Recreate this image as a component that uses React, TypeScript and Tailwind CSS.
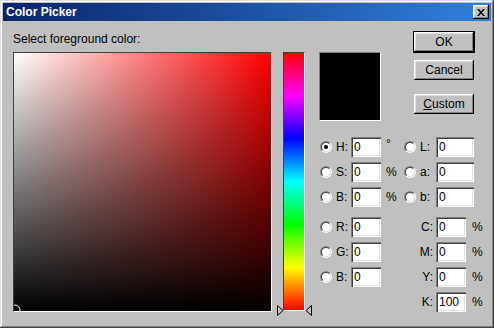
const raised =
  'shadow-[inset_-1px_-1px_#000,inset_1px_1px_#fff,inset_-2px_-2px_#808080,inset_2px_2px_#dfdfdf]';
const sunken =
  'shadow-[inset_1px_1px_#808080,inset_2px_2px_#404040,inset_-1px_-1px_#fff,inset_-2px_-2px_#dfdfdf]';

function Radio({ checked = false }: { checked?: boolean }) {
  return (
    <span className="flex h-[12px] w-[12px] items-center justify-center rounded-full border border-t-[#808080] border-l-[#808080] border-r-white border-b-white">
      <span className="flex h-[10px] w-[10px] items-center justify-center rounded-full border border-t-[#404040] border-l-[#404040] border-r-[#dfdfdf] border-b-[#dfdfdf] bg-white">
        {checked && <span className="h-[4px] w-[4px] rounded-full bg-black" />}
      </span>
    </span>
  );
}

function Field({ value, wide = false }: { value: string; wide?: boolean }) {
  return (
    <div className={`h-[20px] ${wide ? 'w-[38px]' : 'w-[30px]'} bg-white pl-[3px] pt-[3px] leading-[14px] ${sunken}`}>
      {value}
    </div>
  );
}

// left column: radio + label + field + unit
function LeftCell({ label, unit, checked }: { label: string; unit?: string; checked?: boolean }) {
  return (
    <div className="flex h-[20px] w-[85px] items-center">
      <div className="w-[14px] pl-[1px]">
        <Radio checked={checked} />
      </div>
      <span className="w-[18px] pl-[3px]">{label}</span>
      <Field value="0" />
      {unit && (
        <span className={`ml-[5px] ${unit === '°' ? 'self-start leading-[14px]' : ''}`}>{unit}</span>
      )}
    </div>
  );
}

function LabCell({ label }: { label: string }) {
  return (
    <div className="flex h-[20px] items-center">
      <Radio />
      <span className="w-[20px] pl-[4px]">{label}</span>
      <Field value="0" wide />
    </div>
  );
}

function CmykCell({ label, value = '0' }: { label: string; value?: string }) {
  return (
    <div className="flex h-[20px] items-center">
      <span className="w-[32px] pr-[3px] text-right">{label}</span>
      <Field value={value} />
      <span className="ml-[6px]">%</span>
    </div>
  );
}

function Button({ children, isDefault = false }: { children: React.ReactNode; isDefault?: boolean }) {
  const inner = (
    <div className={`flex h-[20px] w-[60px] items-center justify-center bg-[#c0c0c0] ${raised}`}>{children}</div>
  );
  return isDefault ? <div className="border border-black">{inner}</div> : <div className="ml-[1px]">{inner}</div>;
}

export default function App() {
  return (
    <div className="h-[328px] w-[494px] bg-[#c0c0c0] p-[3px] text-[12px] text-black font-['Liberation_Sans',Arial,sans-serif] shadow-[inset_-1px_-1px_#404040,inset_1px_1px_#dfdfdf,inset_-2px_-2px_#808080,inset_2px_2px_#fff]">
      {/* title bar */}
      <div className="flex h-[18px] items-center justify-between bg-[linear-gradient(to_right,#0a246a,#3080dc)] pl-[3px] pr-[2px]">
        <span className="text-[12px] font-bold leading-[14px] text-white">Color Picker</span>
        <div className={`flex h-[14px] w-[16px] items-center justify-center bg-[#c0c0c0] ${raised}`}>
          <svg width="8" height="7" viewBox="0 0 8 7">
            <path d="M0 0h2l2 2.5L6 0h2L5 3.5 8 7H6L4 4.5 2 7H0l3-3.5z" fill="#000" />
          </svg>
        </div>
      </div>

      <div className="flex items-start pl-[10px]">
        {/* gradient field */}
        <div className="w-[259px] pt-[11px]">
          <div className="h-[14px] leading-[14px]">Select foreground color:</div>
          <div className="relative mt-[6px] h-[260px] w-[259px] overflow-hidden border border-t-[#404040] border-l-[#404040] border-r-white border-b-white bg-[linear-gradient(to_top,#000,rgba(0,0,0,0)),linear-gradient(to_right,#fff,#f00)]">
            <svg className="absolute bottom-0 left-0" width="12" height="12" viewBox="0 0 12 12">
              <circle cx="1" cy="11" r="5" fill="none" stroke="#fff" strokeWidth="1" />
            </svg>
          </div>
        </div>

        {/* hue slider */}
        <div className="relative ml-[11px] mt-[31px] h-[259px] w-[22px] border border-t-[#404040] border-l-[#404040] border-r-white border-b-white bg-[linear-gradient(to_bottom,#f00,#f0f,#00f,#0ff,#0f0,#ff0,#f00)]">
          <svg className="absolute left-[-7px] top-[252px]" width="7" height="11" viewBox="0 0 7 11">
            <path d="M0.5 0.5L6 5.5L0.5 10.5Z" fill="#c0c0c0" stroke="#000" strokeWidth="1" />
          </svg>
          <svg className="absolute right-[-8px] top-[252px]" width="7" height="11" viewBox="0 0 7 11">
            <path d="M6.5 0.5L1 5.5L6.5 10.5Z" fill="#c0c0c0" stroke="#000" strokeWidth="1" />
          </svg>
        </div>

        {/* right side */}
        <div className="ml-[14px] pt-[10px]">
          <div className="flex items-start">
            <div className="mt-[21px] h-[69px] w-[62px] border border-t-[#808080] border-l-[#808080] border-r-white border-b-white bg-black" />
            <div className="ml-[32px] flex flex-col">
              <Button isDefault>OK</Button>
              <div className="mt-[7px]">
                <Button>Cancel</Button>
              </div>
              <div className="mt-[14px]">
                <Button>
                  <span>
                    <span className="underline">C</span>ustom
                  </span>
                </Button>
              </div>
            </div>
          </div>

          <div className="mt-[16px] flex flex-col gap-[5px]">
            <div className="flex">
              <LeftCell label="H:" unit="°" checked />
              <LabCell label="L:" />
            </div>
            <div className="flex">
              <LeftCell label="S:" unit="%" />
              <LabCell label="a:" />
            </div>
            <div className="flex">
              <LeftCell label="B:" unit="%" />
              <LabCell label="b:" />
            </div>
            <div className="mt-[5px] flex">
              <LeftCell label="R:" />
              <CmykCell label="C:" />
            </div>
            <div className="flex">
              <LeftCell label="G:" />
              <CmykCell label="M:" />
            </div>
            <div className="flex">
              <LeftCell label="B:" />
              <CmykCell label="Y:" />
            </div>
            <div className="flex">
              <div className="w-[85px]" />
              <CmykCell label="K:" value="100" />
            </div>
          </div>
        </div>
      </div>
    </div>
  );
}
